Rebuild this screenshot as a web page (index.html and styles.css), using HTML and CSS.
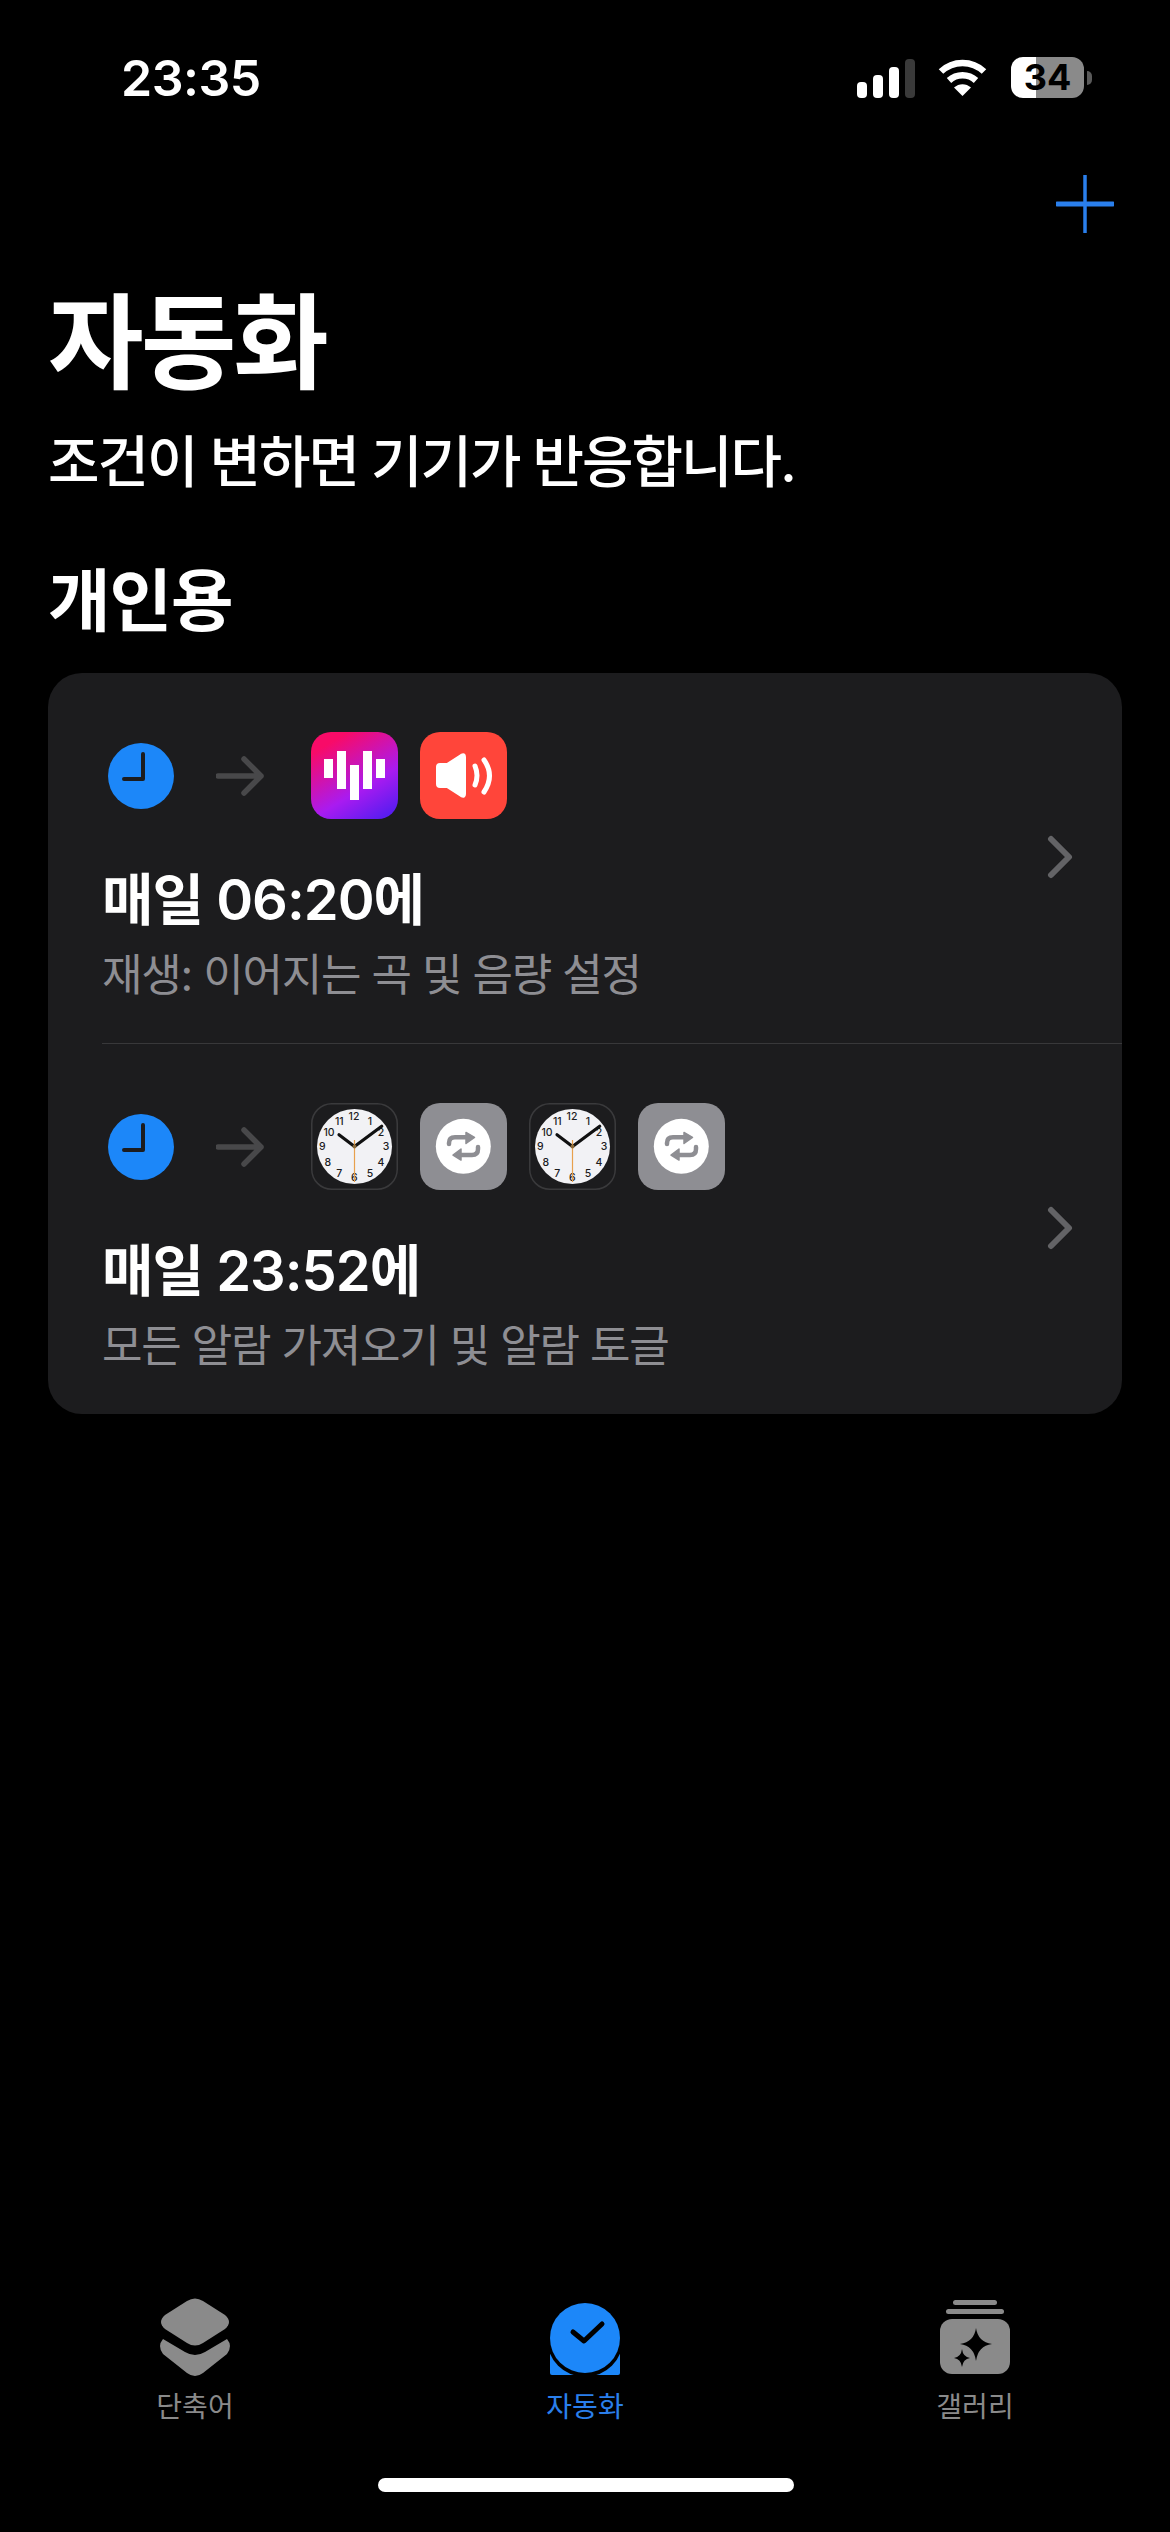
FILE: index.html
```html
<!DOCTYPE html>
<html lang="ko">
<head>
    <meta charset="UTF-8">
    <meta name="viewport" content="width=device-width, initial-scale=1.0">
    <title>자동화</title>
    <link rel="stylesheet" href="styles.css">
</head>
<body>

    <svg class="defs" width="0" height="0">
        <symbol id="timeIcon" viewBox="0 0 66 66">
            <circle cx="33" cy="33" r="33" fill="#1c87f9"/>
            <path d="M35 11V36H16" fill="none" stroke="#1c1c1e" stroke-width="4" stroke-linecap="round" stroke-linejoin="round"/>
        </symbol>
        <symbol id="arrowIcon" viewBox="0 0 48 40">
            <path d="M2 20H45M28 3L45 20L28 37" fill="none" stroke="#48484a" stroke-width="5.500" stroke-linecap="round" stroke-linejoin="round"/>
        </symbol>
        <symbol id="chevronIcon" viewBox="0 0 28 44">
            <path d="M4 4L22 22L4 40" fill="none" stroke="#636366" stroke-width="6" stroke-linecap="round" stroke-linejoin="round"/>
        </symbol>
        <symbol id="repeatApp" viewBox="0 0 87 87">
            <rect width="87" height="87" rx="20" fill="#8e8e93"/>
            <circle cx="43.300" cy="43.300" r="27.500" fill="#fff"/>
            <g fill="none" stroke="#8e8e93" stroke-width="4.500" stroke-linecap="round">
                <path d="M29 41V40Q29 34.300 35 34.300H47"/>
                <path d="M58 44V46Q58 52 52 52H40"/>
            </g>
            <path d="M46 29.500L54.500 34.300L46 40.500ZM41 46L33 52L41 57Z" fill="#8e8e93" stroke="#8e8e93" stroke-width="1.500" stroke-linejoin="round"/>
        </symbol>
    </svg>

    <header class="status-bar">
        <span class="status-time">23:35</span>
        <div class="status-icons">
            <div class="signal">
                <i class="bar-1"></i><i class="bar-2"></i><i class="bar-3"></i><i class="bar-4"></i>
            </div>
            <svg class="wifi" width="49" height="37" viewBox="0 0 49 37">
                <path d="M3 12.500C15 1 34 1 46 12.500" fill="none" stroke="#fff" stroke-width="6.500"/>
                <path d="M11 21.500C18.500 14.500 30.500 14.500 38 21.500" fill="none" stroke="#fff" stroke-width="6.500"/>
                <path d="M24.500 37L16 28.500C21 24 28 24 33 28.500Z" fill="#fff"/>
            </svg>
            <div class="battery">
                <div class="battery-body">34</div>
                <span class="battery-nub"></span>
            </div>
        </div>
    </header>

    <div class="nav-row">
        <svg class="add-btn" width="58" height="58" viewBox="0 0 58 58">
            <path d="M29 0V58" stroke="#2a7fec" stroke-width="3.500" stroke-linecap="round"/>
            <path d="M1 29H57" stroke="#2a7fec" stroke-width="5" stroke-linecap="round"/>
        </svg>
    </div>

    <main class="content">
        <h1 class="page-title">자동화</h1>
        <p class="page-sub">조건이 변하면 기기가 반응합니다.</p>
        <h2 class="section-title">개인용</h2>

        <section class="card">
            <div class="auto-row">
                <div class="auto-main">
                    <div class="flow">
                        <svg class="time-icon"><use href="#timeIcon"/></svg>
                        <svg class="arrow-icon"><use href="#arrowIcon"/></svg>
                        <div class="apps">
                            <svg class="app" viewBox="0 0 87 87">
                                <defs>
                                    <linearGradient id="musicGrad" x1="0.2" y1="0" x2="0.8" y2="1">
                                        <stop offset="0.1" stop-color="#f80b68"/>
                                        <stop offset="0.65" stop-color="#a91bf0"/>
                                        <stop offset="1" stop-color="#5a1cf0"/>
                                    </linearGradient>
                                </defs>
                                <rect width="87" height="87" rx="20" fill="url(#musicGrad)"/>
                                <g fill="#fff">
                                    <rect x="13" y="27" width="9" height="19"/>
                                    <rect x="26" y="19" width="9" height="38"/>
                                    <rect x="39" y="33" width="9" height="35"/>
                                    <rect x="52" y="19" width="9" height="38"/>
                                    <rect x="65" y="27" width="9" height="19"/>
                                </g>
                            </svg>
                            <svg class="app" viewBox="0 0 87 87">
                                <rect width="87" height="87" rx="20" fill="#ff453a"/>
                                <path d="M17 35Q17 32 20 32H27L41 23Q45 21 45 25V62Q45 66 41 64L27 55H20Q17 55 17 52Z" fill="#fff" stroke="#fff" stroke-width="2" stroke-linejoin="round"/>
                                <path d="M55 34Q59 43.500 55 53M64 28Q75 43.500 64 60" fill="none" stroke="#fff" stroke-width="5" stroke-linecap="round"/>
                            </svg>
                        </div>
                    </div>
                    <div class="auto-title">매일 06:20에</div>
                    <div class="auto-desc">재생: 이어지는 곡 및 음량 설정</div>
                </div>
                <svg class="chevron"><use href="#chevronIcon"/></svg>
            </div>

            <div class="divider"></div>

            <div class="auto-row">
                <div class="auto-main">
                    <div class="flow">
                        <svg class="time-icon"><use href="#timeIcon"/></svg>
                        <svg class="arrow-icon"><use href="#arrowIcon"/></svg>
                        <div class="apps">
                            <svg class="app" viewBox="0 0 87 87">
                                <rect x="0.750" y="0.750" width="85.500" height="85.500" rx="20" fill="#1c1c1e" stroke="#3a3a3c" stroke-width="1.500"/>
                                <circle cx="43.500" cy="43.500" r="37.500" fill="#f2f2f5"/>
                                <g class="clock-nums" text-anchor="middle">
                                    <text x="43" y="16.500">12</text>
                                    <text x="59" y="21.500">1</text>
                                    <text x="70" y="32.500">2</text>
                                    <text x="75" y="47">3</text>
                                    <text x="70" y="62.500">4</text>
                                    <text x="59" y="73.500">5</text>
                                    <text x="43.300" y="78">6</text>
                                    <text x="28.300" y="73.500">7</text>
                                    <text x="16.700" y="62.500">8</text>
                                    <text x="11.300" y="47">9</text>
                                    <text x="18" y="32.500">10</text>
                                    <text x="28.300" y="21.500">11</text>
                                </g>
                                <path d="M43.500 43.500L28 31.700M43.500 43.500L70.700 23.300" stroke="#111" stroke-width="3.200" stroke-linecap="round"/>
                                <path d="M43.500 37V79" stroke="#e8a04c" stroke-width="1.200"/>
                                <circle cx="43.500" cy="43.500" r="2" fill="#8a6a3a"/>
                            </svg>
                            <svg class="app"><use href="#repeatApp"/></svg>
                            <svg class="app" viewBox="0 0 87 87">
                                <rect x="0.750" y="0.750" width="85.500" height="85.500" rx="20" fill="#1c1c1e" stroke="#3a3a3c" stroke-width="1.500"/>
                                <circle cx="43.500" cy="43.500" r="37.500" fill="#f2f2f5"/>
                                <g class="clock-nums" text-anchor="middle">
                                    <text x="43" y="16.500">12</text>
                                    <text x="59" y="21.500">1</text>
                                    <text x="70" y="32.500">2</text>
                                    <text x="75" y="47">3</text>
                                    <text x="70" y="62.500">4</text>
                                    <text x="59" y="73.500">5</text>
                                    <text x="43.300" y="78">6</text>
                                    <text x="28.300" y="73.500">7</text>
                                    <text x="16.700" y="62.500">8</text>
                                    <text x="11.300" y="47">9</text>
                                    <text x="18" y="32.500">10</text>
                                    <text x="28.300" y="21.500">11</text>
                                </g>
                                <path d="M43.500 43.500L28 31.700M43.500 43.500L70.700 23.300" stroke="#111" stroke-width="3.200" stroke-linecap="round"/>
                                <path d="M43.500 37V79" stroke="#e8a04c" stroke-width="1.200"/>
                                <circle cx="43.500" cy="43.500" r="2" fill="#8a6a3a"/>
                            </svg>
                            <svg class="app"><use href="#repeatApp"/></svg>
                        </div>
                    </div>
                    <div class="auto-title">매일 23:52에</div>
                    <div class="auto-desc">모든 알람 가져오기 및 알람 토글</div>
                </div>
                <svg class="chevron"><use href="#chevronIcon"/></svg>
            </div>
        </section>
    </main>

    <nav class="tab-bar">
        <div class="tab">
            <svg class="tab-icon" viewBox="0 0 80 84">
                <path d="M32 5Q40 0 48 5L70 19Q78 26 70 33L48 47Q40 52 32 47L10 33Q2 26 10 19Z" fill="#8a8a8a"/>
                <path d="M8 43L30 56Q40 62 50 56L72 43Q78 50 72 58L48 77Q40 83 32 77L8 58Q2 50 8 43Z" fill="#8a8a8a"/>
            </svg>
            <span class="tab-label">단축어</span>
        </div>
        <div class="tab tab-active">
            <svg class="tab-icon" viewBox="0 0 80 84">
                <path d="M5 56V77Q5 79 7 79H73Q75 79 75 77V56Z" fill="#1c87f9"/>
                <circle cx="40" cy="43" r="38" fill="#000"/>
                <circle cx="40" cy="42" r="35" fill="#1c87f9"/>
                <path d="M28 36L39 45L57 28" fill="none" stroke="#000" stroke-width="5" stroke-linecap="round" stroke-linejoin="round"/>
            </svg>
            <span class="tab-label">자동화</span>
        </div>
        <div class="tab">
            <svg class="tab-icon" viewBox="0 0 80 84">
                <rect x="18" y="4" width="44" height="5" rx="2.500" fill="#8a8a8a"/>
                <rect x="11" y="13" width="58" height="5" rx="2.500" fill="#8a8a8a"/>
                <rect x="5" y="23" width="70" height="55" rx="12" fill="#8a8a8a"/>
                <path d="M41 32Q43 46 57 48Q43 50 41 65Q39 50 25 48Q39 46 41 32Z" fill="#000"/>
                <path d="M27 53Q28 61 35 62Q28 63 27 71Q26 63 19 62Q26 61 27 53Z" fill="#000"/>
            </svg>
            <span class="tab-label">갤러리</span>
        </div>
    </nav>

    <div class="home-row">
        <div class="home-indicator"></div>
    </div>

</body>
</html>
```

FILE: styles.css
```css
* {
    box-sizing: border-box;
}

body {
    margin: 0;
    width: 1170px;
    height: 2532px;
    background-color: #000;
    color: #fff;
    font-family: "Inter", "Noto Sans CJK KR", sans-serif;
    display: flex;
    flex-direction: column;
    overflow: hidden;
}

.defs {
    position: absolute;
}

/* Status bar */
.status-bar {
    height: 100px;
    padding: 49px 78px 0 121px;
    display: flex;
    justify-content: space-between;
    align-items: flex-start;
}

.status-time {
    font-size: 50px;
    font-weight: 600;
    line-height: 58px;
    letter-spacing: -0.5px;
}

.status-icons {
    display: flex;
    align-items: flex-start;
    padding-top: 8px;
}

.signal {
    display: flex;
    align-items: flex-end;
    gap: 6px;
    height: 39px;
    margin-top: 2px;
    margin-right: 23px;
}

.signal i {
    display: block;
    width: 10px;
    border-radius: 4px;
    background-color: #fff;
}

.signal .bar-1 { height: 16px; }
.signal .bar-2 { height: 23px; }
.signal .bar-3 { height: 31px; }
.signal .bar-4 { height: 39px; background-color: #3a3a3a; }

.wifi {
    margin-top: 2px;
    margin-right: 24px;
}

.battery {
    display: flex;
    align-items: center;
}

.battery-body {
    width: 73px;
    height: 41px;
    border-radius: 12px;
    background: linear-gradient(90deg, #fff 34%, #8a8a8a 34%);
    color: #000;
    font-size: 36px;
    font-weight: 700;
    line-height: 41px;
    text-align: center;
}

.battery-nub {
    width: 5px;
    height: 14px;
    margin-left: 3px;
    border-radius: 0 7px 7px 0;
    background-color: #5a5a5a;
}

/* Nav */
.nav-row {
    padding: 75px 56px 0 0;
    display: flex;
    justify-content: flex-end;
}

.add-btn {
    display: block;
}

/* Content */
.content {
    padding: 0 48px;
    flex: 1;
}

.page-title {
    margin: 45px 0 0;
    font-size: 104px;
    font-weight: 700;
    line-height: 130px;
    letter-spacing: -3px;
}

.page-sub {
    margin: 17px 0 0;
    font-size: 56px;
    font-weight: 500;
    line-height: 74px;
    letter-spacing: -2px;
}

.section-title {
    margin: 62px 0 0;
    font-size: 68px;
    font-weight: 700;
    line-height: 80px;
    letter-spacing: -1px;
}

.card {
    margin-top: 32px;
    width: 1074px;
    height: 741px;
    border-radius: 34px;
    background-color: #1c1c1e;
    overflow: hidden;
}

.auto-row {
    height: 370px;
    padding: 59px 47px 0 54px;
    display: flex;
    justify-content: space-between;
    align-items: flex-start;
}

.flow {
    height: 87px;
    display: flex;
    align-items: center;
}

.time-icon {
    width: 66px;
    height: 66px;
    margin-left: 6px;
}

.arrow-icon {
    width: 48px;
    height: 40px;
    margin-left: 42px;
}

.apps {
    display: flex;
    gap: 22px;
    margin-left: 47px;
}

.app {
    display: block;
    width: 87px;
    height: 87px;
}

.clock-nums {
    font-family: "Inter", sans-serif;
    font-size: 10.5px;
    font-weight: 500;
    fill: #1c1c1e;
}

.auto-title {
    margin-top: 43px;
    font-size: 56px;
    font-weight: 600;
    line-height: 76px;
    letter-spacing: -1px;
}

.auto-desc {
    margin-top: 6px;
    color: #8e8e93;
    font-size: 44px;
    line-height: 62px;
    letter-spacing: -1.200px;
}

.chevron {
    width: 28px;
    height: 44px;
    margin-top: 103px;
}

.divider {
    height: 1px;
    margin-left: 54px;
    background-color: #38383a;
}

/* Tab bar */
.tab-bar {
    display: grid;
    grid-template-columns: repeat(3, 390px);
    height: 182px;
}

.tab {
    display: flex;
    flex-direction: column;
    align-items: center;
    color: #8a8a8a;
}

.tab-active {
    color: #2a7fec;
}

.tab-icon {
    display: block;
    width: 80px;
    height: 84px;
}

.tab-label {
    margin-top: 5px;
    font-size: 28px;
    line-height: 44px;
}

.home-row {
    height: 54px;
    display: flex;
    justify-content: center;
}

.home-indicator {
    width: 416px;
    height: 14px;
    margin-left: 2px;
    border-radius: 7px;
    background-color: #fff;
}
```
